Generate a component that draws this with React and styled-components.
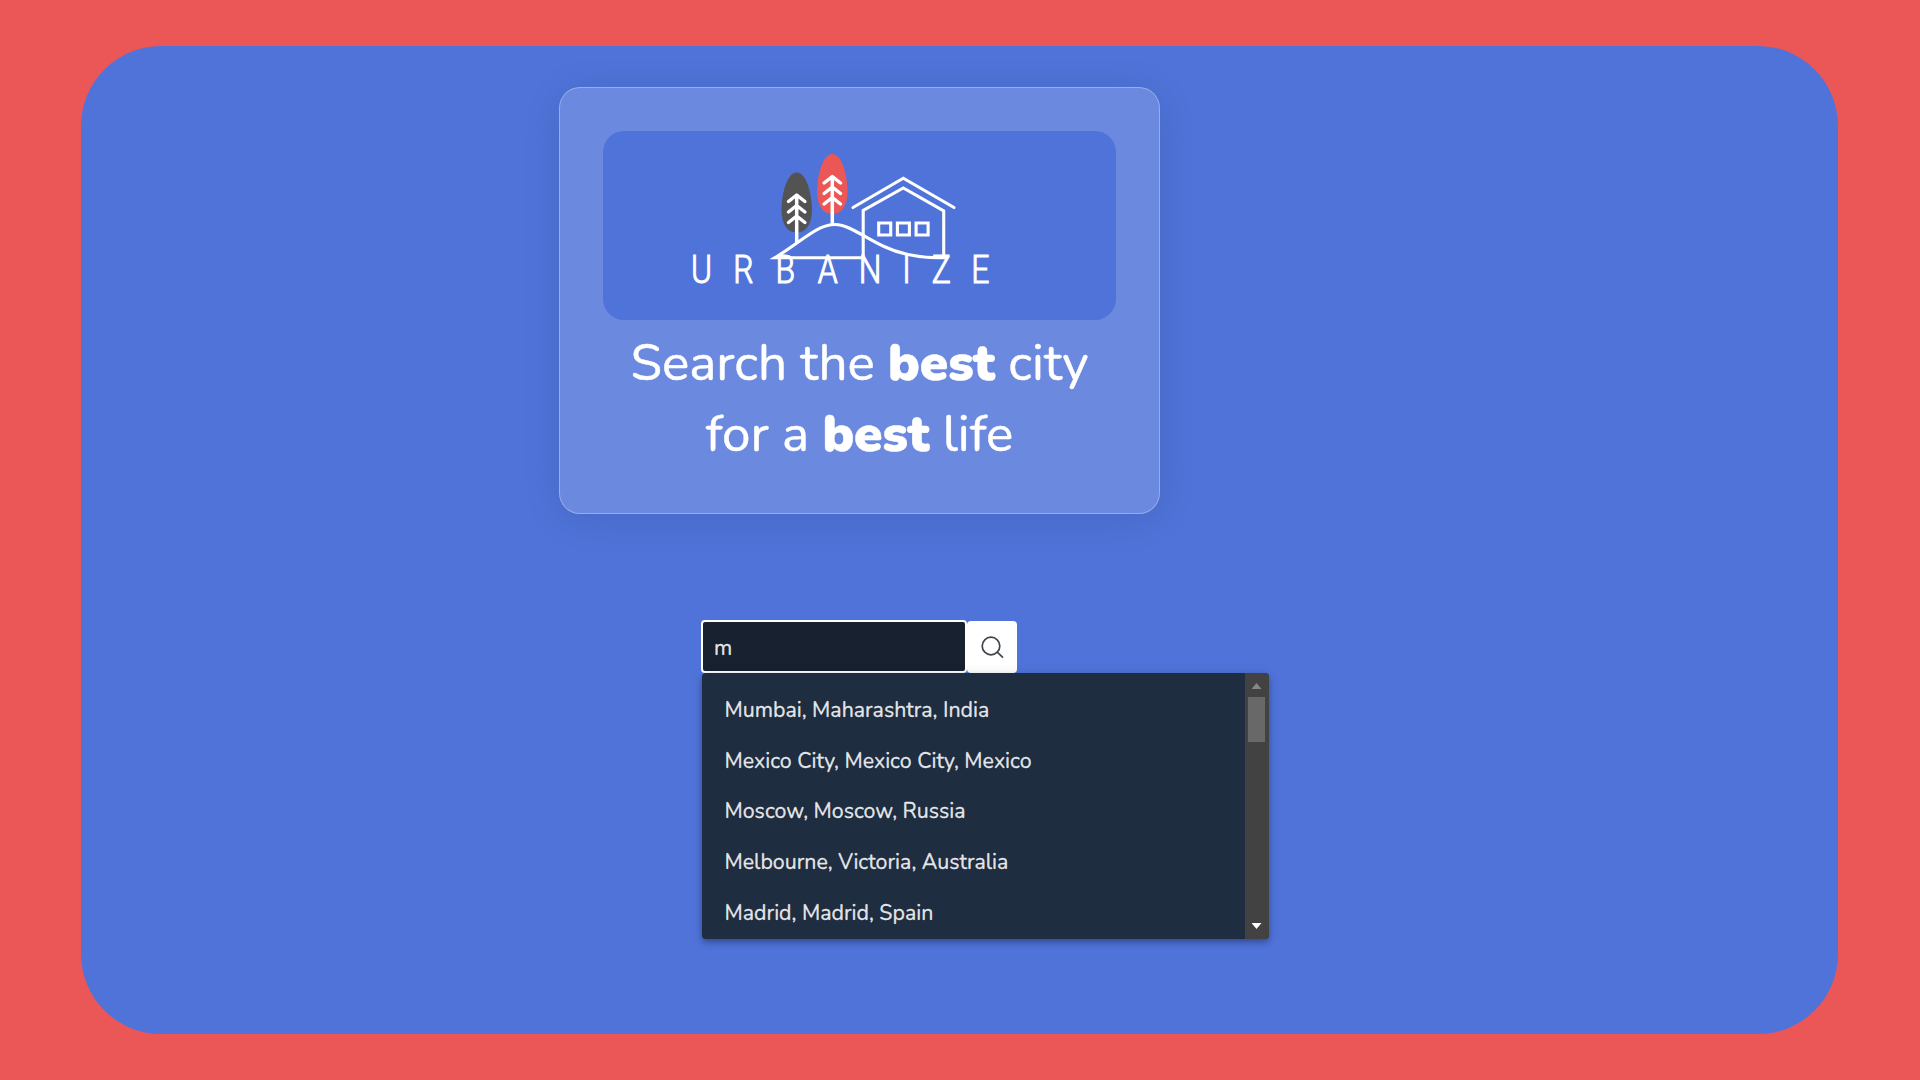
import React from "react";
import styled, { createGlobalStyle } from "styled-components";

const GlobalStyle = createGlobalStyle`
  *, *::before, *::after { box-sizing: border-box; }
  body {
    margin: 0;
    background: #eb5757;
    font-family: Nunito, Lato, sans-serif;
  }
`;

const Page = styled.div`
  height: 1080px;
  padding: 46px 82px 46px 81px;
  background: #eb5757;
  overflow: hidden;
`;

const Panel = styled.main`
  height: 988px;
  padding: 41px 200px 0 0;
  display: flex;
  flex-direction: column;
  align-items: center;
  background: #4f73d9;
  border-radius: 80px;
`;

const Card = styled.section`
  width: 601px;
  height: 427px;
  padding: 43px;
  background: rgba(255, 255, 255, 0.16);
  border: 1px solid rgba(255, 255, 255, 0.3);
  border-radius: 21px;
  box-shadow: 0 5px 38px rgba(0, 0, 0, 0.1);
`;

const LogoBox = styled.div`
  height: 189px;
  border-radius: 21px;
  background: #4f73d9;
  overflow: hidden;
`;

const LogoSvg = styled.svg`
  display: block;
  width: 100%;
  height: 190px;
`;

const Wordmark = styled.text`
  font-family: Roboto, sans-serif;
  font-weight: 300;
  font-size: 38px;
  text-anchor: middle;
  fill: #fff;
`;

const Heading = styled.h1`
  margin: 8px 0 0;
  color: #fff;
  font-size: 51.2px;
  font-weight: 400;
  line-height: 71px;
  text-align: center;
  white-space: nowrap;
  -webkit-text-stroke: 0.5px #fff;
`;

const Strong = styled.strong`
  font-weight: 900;
`;

const SearchBar = styled.div`
  position: relative;
  width: 316px;
  margin: 106px 1px 0 0;
  display: flex;
  align-items: stretch;
  height: 53px;
`;

const Input = styled.div`
  width: 266px;
  padding: 3px 0 0 11px;
  display: flex;
  align-items: center;
  background: #17212f;
  border: 2px solid #fff;
  border-radius: 4px;
  color: rgba(255, 255, 255, 0.87);
  font-size: 21.3px;
  line-height: 28px;
  -webkit-text-stroke: 0.3px;
`;

const SearchButton = styled.button`
  flex: 1;
  margin: 1px 0 0;
  padding: 0;
  display: flex;
  align-items: center;
  justify-content: center;
  background: #fff;
  border: 0;
  border-radius: 4px;
`;

const Dropdown = styled.div`
  position: absolute;
  top: 53px;
  left: 1px;
  width: 567px;
  height: 266px;
  display: flex;
  background: #1f2d40;
  border-radius: 4px;
  overflow: hidden;
  box-shadow: 0 2px 5px -1px rgba(0, 0, 0, 0.2), 0 5px 6px rgba(0, 0, 0, 0.14),
    0 1px 12px rgba(0, 0, 0, 0.12);
`;

const Options = styled.ul`
  flex: 1;
  margin: 0;
  padding: 12px 0 0;
  list-style: none;
`;

const Option = styled.li`
  height: 50.7px;
  padding: 0 22.5px;
  color: rgba(255, 255, 255, 0.87);
  font-size: 21.35px;
  line-height: 50.7px;
  white-space: nowrap;
  -webkit-text-stroke: 0.3px;
`;

const Scrollbar = styled.div`
  width: 24px;
  padding: 10px 4px 10px 3px;
  display: flex;
  flex-direction: column;
  align-items: center;
  background: #424242;
`;

const Thumb = styled.div`
  width: 17px;
  height: 45px;
  margin-top: 8px;
  background: #686868;
`;

const Arrow = styled.div`
  width: 10px;
  height: 6px;
  background: ${(p) => (p.$down ? "#fff" : "#868686")};
  clip-path: ${(p) =>
    p.$down ? "polygon(0 0, 100% 0, 50% 100%)" : "polygon(0 100%, 100% 100%, 50% 0)"};
  margin-top: ${(p) => (p.$down ? "auto" : "0")};
`;

const cities = [
  "Mumbai, Maharashtra, India",
  "Mexico City, Mexico City, Mexico",
  "Moscow, Moscow, Russia",
  "Melbourne, Victoria, Australia",
  "Madrid, Madrid, Spain",
];

function Tree({ x, y, color }) {
  return (
    <g transform={`translate(${x} ${y})`}>
      <path
        fill={color}
        d="M0 0C9.5 0 15.2 21 15.2 37.5C15.2 51 10 60 0 60S-15.2 51-15.2 37.5C-15.2 21-9.5 0 0 0Z"
      />
      <path
        fill="none"
        stroke="#fff"
        strokeWidth="3.5"
        strokeLinecap="round"
        strokeLinejoin="round"
        d="M0 23V70M-8.2 29L0 22.500L8.200 29M-8.200 39.500L0 33L8.200 39.500M-8.200 50L0 43.500L8.200 50"
      />
    </g>
  );
}

const wordmark = [
  ["U", 701.5],
  ["R", 743.4],
  ["B", 785.4],
  ["A", 827.7],
  ["N", 870.2],
  ["I", 906.5],
  ["Z", 941.2],
  ["E", 980.4],
];
const SQUEEZE = 0.84;

function Logo() {
  return (
    <LogoSvg viewBox="603 131 513 190" role="img" aria-label="Urbanize">
      <Tree x={796.7} y={172.5} color="#535353" />
      <Tree x={832.3} y={154} color="#eb5757" />
      <g fill="none" stroke="#fff" strokeWidth="3.1" strokeLinecap="round" strokeLinejoin="miter">
        <path d="M863 257.700H775C793 247 807 234.500 820 228.200C831 223 839 223.500 850 228.500C862 234 870 240 884 246.500C902 255 922 258.300 945 257.700" />
        <path d="M863.200 258V210.500L903.300 188L943.700 211V257.500" />
        <path d="M853 207.500L903.300 178.200L954 207.500" />
        <path d="M878.700 223h12v12h-12zM897.400 223h12v12h-12zM916.100 223h12v12h-12z" />
      </g>
      <g transform={`scale(${SQUEEZE} 1)`}>
        <Wordmark
          y="282.700"
          x={wordmark.map(([, x]) => (x / SQUEEZE).toFixed(2)).join(" ")}
          stroke="#fff"
          strokeWidth="1.1"
        >
          {wordmark.map(([c]) => c).join("")}
        </Wordmark>
      </g>
    </LogoSvg>
  );
}

function SearchIcon() {
  return (
    <svg width="23" height="23" viewBox="0 0 23 23" fill="none" stroke="#40454c" strokeWidth="1.7">
      <circle cx="10" cy="10" r="8.800" />
      <path d="M16.200 16.200L22 21.700" />
    </svg>
  );
}

export default function App() {
  return (
    <>
      <GlobalStyle />
      <Page>
        <Panel>
          <Card>
            <LogoBox>
              <Logo />
            </LogoBox>
            <Heading>
              Search the <Strong>best</Strong> city
              <br />
              for a <Strong>best</Strong> life
            </Heading>
          </Card>
          <SearchBar>
            <Input>m</Input>
            <SearchButton aria-label="Search">
              <SearchIcon />
            </SearchButton>
            <Dropdown>
              <Options>
                {cities.map((city) => (
                  <Option key={city}>{city}</Option>
                ))}
              </Options>
              <Scrollbar>
                <Arrow />
                <Thumb />
                <Arrow $down />
              </Scrollbar>
            </Dropdown>
          </SearchBar>
        </Panel>
      </Page>
    </>
  );
}
